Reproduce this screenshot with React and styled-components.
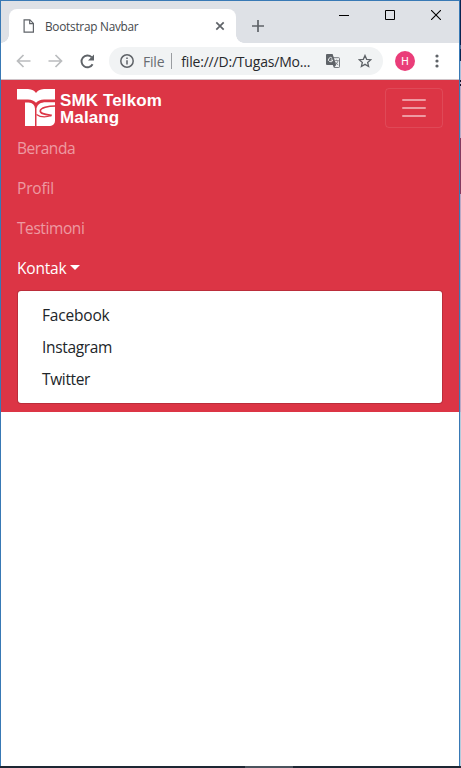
import React from "react";
import styled, { createGlobalStyle } from "styled-components";

const GlobalStyle = createGlobalStyle`
  *, *::before, *::after { box-sizing: border-box; }
  html, body { margin: 0; padding: 0; }
  body { overflow: hidden; font-family: "Open Sans", "Noto Sans", sans-serif; }
  button { font: inherit; margin: 0; padding: 0; border: 0; background: none; }
`;

const Desktop = styled.div`
  display: flex;
  flex-direction: column;
  width: 461px;
  height: 768px;
`;

const Workspace = styled.div`
  display: flex;
  height: 766px;
`;

const Wallpaper = styled.div`
  width: 1px;
  background: linear-gradient(
    #0b2350 0 45px, #4a6c96 45px 49px, #0a2450 49px 61px, #a9c0dc 61px 80px,
    #14102c 80px 82px, #b9b4cc 82px 84px, #14102c 84px 86px, #b9acc8 86px 138px,
    #85395f 138px 194px, #b9a9c6 194px 412px, #b4cbdc 412px
  );
`;

const Taskbar = styled.div`
  height: 2px;
  background: linear-gradient(90deg, #1d2733 0 245px, #4b545e 245px 293px, #1d2733 293px);
`;

const Window = styled.div`
  display: flex;
  flex-direction: column;
  width: 460px;
  background: #fff;
  border: 1px solid #3879b5;
  border-bottom: 0;
`;

const TabStrip = styled.div`
  display: flex;
  height: 42px;
  padding-left: 8px;
  background: #dee1e6;
`;

const Tab = styled.div`
  position: relative;
  display: flex;
  align-items: center;
  width: 227px;
  height: 34px;
  margin-top: 8px;
  padding: 0 11px 0 14px;
  border-radius: 8px 8px 0 0;
  background: #fff;

  &::before, &::after {
    content: "";
    position: absolute;
    bottom: 0;
    width: 8px;
    height: 8px;
  }
  &::before {
    left: -8px;
    background: radial-gradient(circle at 0 0, transparent 7.5px, #fff 8px);
  }
  &::after {
    right: -8px;
    background: radial-gradient(circle at 100% 0, transparent 7.5px, #fff 8px);
  }
`;

const TabTitle = styled.span`
  flex: 1;
  margin-left: 10px;
  color: #45494d;
  font-size: 11.8px;
  line-height: 16px;
  letter-spacing: -0.25px;
  white-space: nowrap;
`;

const NewTab = styled.button`
  display: flex;
  margin: 19px 0 0 16px;
  height: 12px;
`;

const WindowControls = styled.div`
  display: flex;
  flex: 1;
  justify-content: flex-end;
  height: 28px;
`;

const ControlButton = styled.button`
  display: flex;
  align-items: center;
  justify-content: center;
  width: 46px;
`;

const Toolbar = styled.div`
  display: flex;
  align-items: center;
  height: 37px;
  padding: 0 15px 0 15px;
  border-bottom: 1px solid #cfc3c8;
  background: #fff;
`;

const NavButtons = styled.div`
  display: flex;
  align-items: center;
  gap: 17px;
  width: 93px;
`;

const AddressBar = styled.div`
  display: flex;
  align-items: center;
  width: 274px;
  height: 28px;
  padding: 0 11px;
  border-radius: 14px;
  background: #f1f3f4;
`;

const Scheme = styled.span`
  margin-left: 9px;
  color: #686c71;
  font-size: 14px;
  letter-spacing: -0.2px;
`;

const Divider = styled.span`
  width: 1px;
  height: 16px;
  margin: 0 9px 0 7px;
  background: #9a9da1;
`;

const Url = styled.span`
  flex: 1;
  color: #27292c;
  font-size: 14px;
  letter-spacing: -0.2px;
  white-space: nowrap;
`;

const AddressActions = styled.div`
  display: flex;
  align-items: center;
  gap: 18px;
`;

const Avatar = styled.div`
  display: flex;
  align-items: center;
  justify-content: center;
  width: 20px;
  height: 20px;
  margin: 0 20px 0 12px;
  border-radius: 50%;
  background: #ea3d79;
  color: #fff;
  font: 10.5px Roboto, sans-serif;
`;

const Navbar = styled.nav`
  height: 332px;
  padding: 8px 16px;
  background: #dc3545;
`;

const NavbarHeader = styled.div`
  display: flex;
  justify-content: space-between;
  height: 40px;
`;

const Brand = styled.a`
  display: flex;
  color: #fff;
`;

const BrandName = styled.span`
  margin: 4px 0 0 4px;
  font: bold 17px/17px "Liberation Sans", Arial, sans-serif;
  letter-spacing: 0.13px;
  white-space: nowrap;
`;

const Toggler = styled.button`
  display: flex;
  align-items: center;
  justify-content: center;
  width: 58px;
  height: 40px;
  border: 1px solid rgba(255, 255, 255, 0.1);
  border-radius: 4px;
`;

const NavList = styled.ul`
  margin: 0;
  padding: 0;
  list-style: none;
`;

const NavLink = styled.a`
  display: flex;
  align-items: center;
  height: 40px;
  color: ${(p) => (p.$active ? "#fff" : "rgba(255, 255, 255, 0.5)")};
  font-size: 15.5px;
  line-height: 24px;
  letter-spacing: ${(p) => p.$spacing};
`;

const Caret = styled.span`
  margin: -1px 0 0 4px;
  border: 5px solid transparent;
  border-top-color: currentColor;
  border-bottom: 0;
`;

const DropdownMenu = styled.div`
  margin-top: 2px;
  padding: 8px 0;
  border: 1px solid rgba(0, 0, 0, 0.15);
  border-radius: 4px;
  background: #fff;
  background-clip: padding-box;
`;

const DropdownItem = styled.a`
  display: block;
  padding: 4px 24px;
  color: #212529;
  font-size: 15.5px;
  line-height: 24px;
  letter-spacing: ${(p) => p.$spacing};
`;

const strokeProps = { fill: "none", stroke: "#5f6368", strokeWidth: 1.7 };

const FileIcon = () => (
  <svg width="12" height="14" viewBox="0 0 12 14" {...strokeProps} strokeWidth="1.2">
    <path d="M1.1.9h5.8L10.4 4.400v8.700H1.100z" />
    <path d="M6.700 1v3.700h3.700" />
  </svg>
);

const CloseTabIcon = () => (
  <svg width="10" height="10" viewBox="0 0 10 10" {...strokeProps}>
    <path d="M1.300 1.300l7.400 7.400M8.700 1.300L1.300 8.700" />
  </svg>
);

const PlusIcon = () => (
  <svg width="12" height="12" viewBox="0 0 12 12" {...strokeProps}>
    <path d="M6 0v12M0 6h12" />
  </svg>
);

const BackIcon = () => (
  <svg width="15" height="14" viewBox="0 0 15 14" {...strokeProps} stroke="#babcbe">
    <path d="M14.500 7H1.600M7.500 1L1.500 7l6 6" />
  </svg>
);

const ForwardIcon = () => (
  <svg width="15" height="14" viewBox="0 0 15 14" {...strokeProps} stroke="#babcbe">
    <path d="M.500 7h12.900M7.500 1l6 6-6 6" />
  </svg>
);

const ReloadIcon = () => (
  <svg width="15" height="15" viewBox="0 0 15 15" {...strokeProps} strokeWidth="1.900">
    <path d="M12.600 10.200A5.900 5.900 0 1 1 11.600 3.200" />
    <path d="M14 .600v6H8z" fill="#5f6368" stroke="none" />
  </svg>
);

const InfoIcon = () => (
  <svg width="14" height="14" viewBox="0 0 14 14" {...strokeProps} strokeWidth="1.500">
    <circle cx="7" cy="7" r="6.200" />
    <path d="M7 6.200v4.300M7 3.500v1.500" />
  </svg>
);

const TranslateIcon = () => (
  <svg width="14" height="14" viewBox="0 0 14 14">
    <path d="M5.200 3.700h7.600a.7.7 0 0 1 .7.7v8.400a.7.7 0 0 1-.7.7H8.200" fill="#f1f3f4" stroke="#777b80" />
    <path d="M1 0h5.600l3.700 11H1a1 1 0 0 1-1-1V1a1 1 0 0 1 1-1z" fill="#5f6368" />
    <path d="M6.800 11h3.300l-2.200 2.700z" fill="#5f6368" />
    <path d="M6.200 4.300A2.100 2.100 0 1 0 6.700 6H4.700" fill="none" stroke="#f1f3f4" />
    <path d="M8.800 6.600h4M10.600 5.600v1M12 6.700c-.3 1.700-1.300 3-2.500 4M9.500 8c.6 1.300 1.700 2.400 2.700 3" fill="none" stroke="#777b80" strokeWidth=".8" />
  </svg>
);

const StarIcon = () => (
  <svg width="14" height="14" viewBox="0 0 14 14" {...strokeProps} strokeWidth="1.300">
    <path d="M7 1.500l1.650 3.800 4.150.4-3.150 2.750.95 4.050L7 10.350 3.400 12.500l.95-4.050L1.200 5.700l4.150-.4z" />
  </svg>
);

const MenuDots = () => (
  <svg width="4" height="14" viewBox="0 0 4 14" fill="#5f6368">
    <circle cx="2" cy="2" r="1.600" />
    <circle cx="2" cy="7" r="1.600" />
    <circle cx="2" cy="12" r="1.600" />
  </svg>
);

const MinimizeIcon = () => (
  <svg width="10" height="10" viewBox="0 0 10 10">
    <path d="M0 5.500h10" stroke="#000" />
  </svg>
);

const MaximizeIcon = () => (
  <svg width="10" height="10" viewBox="0 0 10 10">
    <path d="M.5.5h9v9h-9z" fill="none" stroke="#000" />
  </svg>
);

const CloseIcon = () => (
  <svg width="10" height="10" viewBox="0 0 10 10">
    <path d="M0 0l10 10M10 0L0 10" stroke="#000" strokeWidth="1.100" />
  </svg>
);

const SchoolLogo = () => (
  <svg width="39" height="40" viewBox="0 0 39 40" fill="#fff">
    <path d="M0 1h11q6 .4 8 4Q21 1.400 27 1h11v10.500H27q-5.500.2-8 3.300-2.500-3.100-8-3.300H0z" />
    <path d="M8 14.500h3.500q6 .3 6.500 6v17.500H8z" />
    <path d="M38 14.200V32.500c0 3.700-2.400 5.500-6.500 5.500H19.500V20.500c.8-4.300 4-6.300 9.500-6.300z" />
    <path
      d="M38.500 18C31 18 23.500 19.800 23.300 23c-.1 3 6 3.500 11.500 4.400"
      fill="none"
      stroke="#dc3545"
      strokeWidth="1.700"
    />
    <path d="M19.500 26.500c3.500 2.600 9 3 14.500 1.300" fill="none" stroke="#dc3545" strokeWidth="1.200" />
  </svg>
);

const HamburgerIcon = () => (
  <svg width="30" height="30" viewBox="0 0 30 30">
    <path d="M4 7h22M4 15h22M4 23h22" stroke="#fff" strokeOpacity=".5" strokeWidth="2" strokeLinecap="round" />
  </svg>
);

const links = [
  { label: "Beranda", spacing: "-0.45px" },
  { label: "Profil", spacing: "-0.15px" },
  { label: "Testimoni", spacing: "-0.42px" },
];

const contacts = [
  { label: "Facebook", spacing: "-0.18px" },
  { label: "Instagram", spacing: "-0.33px" },
  { label: "Twitter", spacing: "-0.35px" },
];

export default function App() {
  return (
    <>
      <GlobalStyle />
      <Desktop>
        <Workspace>
          <Window>
            <TabStrip>
              <Tab>
                <FileIcon />
                <TabTitle>Bootstrap Navbar</TabTitle>
                <CloseTabIcon />
              </Tab>
              <NewTab aria-label="New tab"><PlusIcon /></NewTab>
              <WindowControls>
                <ControlButton aria-label="Minimize"><MinimizeIcon /></ControlButton>
                <ControlButton aria-label="Maximize"><MaximizeIcon /></ControlButton>
                <ControlButton aria-label="Close"><CloseIcon /></ControlButton>
              </WindowControls>
            </TabStrip>
            <Toolbar>
              <NavButtons>
                <BackIcon />
                <ForwardIcon />
                <ReloadIcon />
              </NavButtons>
              <AddressBar>
                <InfoIcon />
                <Scheme>File</Scheme>
                <Divider />
                <Url>file:///D:/Tugas/Mo...</Url>
                <AddressActions>
                  <TranslateIcon />
                  <StarIcon />
                </AddressActions>
              </AddressBar>
              <Avatar>H</Avatar>
              <MenuDots />
            </Toolbar>
            <Navbar>
              <NavbarHeader>
                <Brand>
                  <SchoolLogo />
                  <BrandName>
                    SMK Telkom
                    <br />
                    Malang
                  </BrandName>
                </Brand>
                <Toggler aria-label="Toggle navigation"><HamburgerIcon /></Toggler>
              </NavbarHeader>
              <NavList>
                {links.map((link) => (
                  <li key={link.label}>
                    <NavLink $spacing={link.spacing}>{link.label}</NavLink>
                  </li>
                ))}
                <li>
                  <NavLink $active $spacing="-0.2px">Kontak<Caret /></NavLink>
                  <DropdownMenu>
                    {contacts.map((item) => (
                      <DropdownItem key={item.label} $spacing={item.spacing}>{item.label}</DropdownItem>
                    ))}
                  </DropdownMenu>
                </li>
              </NavList>
            </Navbar>
          </Window>
          <Wallpaper />
        </Workspace>
        <Taskbar />
      </Desktop>
    </>
  );
}
